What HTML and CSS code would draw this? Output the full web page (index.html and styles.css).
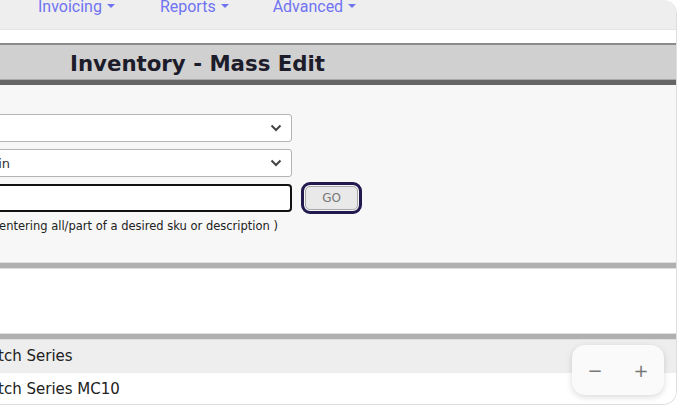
FILE: index.html
```html
<!DOCTYPE html>
<html lang="en">
<head>
  <meta charset="UTF-8" />
  <title>Inventory - Mass Edit</title>
  <link rel="stylesheet" href="styles.css">
</head>
<body>
  <div class="app">
    <nav class="navbar">
      <a href="#">Invoicing <span class="caret"></span></a>
      <a href="#">Reports <span class="caret"></span></a>
      <a href="#">Advanced <span class="caret"></span></a>
    </nav>
    <div class="nav-gap"></div>

    <div class="title-bar">
      <h1>Inventory - Mass Edit</h1>
    </div>

    <!-- Filtros -->
    <div class="filtros">
      <div class="campo">
        <div class="select-box">
          <span></span>
          <svg viewBox="0 0 12 8" width="12" height="8"><path d="M1.5 1.5 L6 6 L10.5 1.5" fill="none" stroke="#444" stroke-width="2"/></svg>
        </div>
      </div>
      <div class="campo">
        <div class="select-box">
          <span>Begin</span>
          <svg viewBox="0 0 12 8" width="12" height="8"><path d="M1.5 1.5 L6 6 L10.5 1.5" fill="none" stroke="#444" stroke-width="2"/></svg>
        </div>
      </div>
      <div class="campo">
        <div class="input-box"></div>
        <div class="go-ring"><button type="button">GO</button></div>
      </div>
      <p class="ajuda">( Search by entering all/part of a desired sku or description )</p>
    </div>

    <div class="divisor"></div>
    <div class="vazio"></div>
    <div class="divisor"></div>

    <div class="linha cinza">Watch Series</div>
    <div class="linha">Watch Series MC10</div>
  </div>

  <div class="zoom">
    <span>&minus;</span>
    <span>+</span>
  </div>
</body>
</html>
```

FILE: styles.css
```css
/* Página */
body {
  margin: 0;
  background-color: #ffffff;
  font-family: 'DejaVu Sans', Verdana, sans-serif;
  color: #222;
  overflow: hidden;
}

.app {
  margin-left: -281px;
  width: 957px;
  height: 404px;
  border-right: 1px solid #dedede;
  border-bottom: 1px solid #dedede;
  border-radius: 0 14px 14px 0;
  overflow: hidden;
  background-color: #f7f7f7;
}

/* Menu */
.navbar {
  height: 30px;
  background-color: #eeeeee;
  display: flex;
  align-items: flex-start;
  padding-left: 319px;
  border-bottom: 1px solid #e4e4e4;
  box-sizing: border-box;
}

.navbar a {
  font-family: Roboto, sans-serif;
  font-size: 16px;
  line-height: 20px;
  margin-top: -3px;
  color: #7073f2;
  text-decoration: none;
  margin-right: 45px;
}

.navbar a:nth-child(2) {
  margin-right: 44px;
}

.caret {
  display: inline-block;
  width: 0;
  height: 0;
  border-left: 4px solid transparent;
  border-right: 4px solid transparent;
  border-top: 4px solid #7073f2;
  vertical-align: 4px;
  margin-left: 1px;
}

.nav-gap {
  height: 13px;
  background-color: #ffffff;
}

/* Título */
.title-bar {
  background-color: #d0d0d0;
  border-top: 2px solid #8a8a8a;
  border-bottom: 5px solid #666666;
  box-shadow: inset 0 -1px 0 #aaaaaa;
  height: 35px;
  text-align: center;
}

.title-bar h1 {
  margin: 0;
  font-size: 21.3px;
  line-height: 37px;
  font-weight: bold;
  color: #1c1c2a;
}

/* Filtros */
.filtros {
  padding: 29px 0 0 173px;
  height: 148px;
  box-sizing: content-box;
}

.campo {
  display: flex;
  align-items: flex-start;
  gap: 9px;
  margin-bottom: 7px;
}

.select-box {
  width: 400px;
  height: 28px;
  box-sizing: border-box;
  background-color: #ffffff;
  border: 1px solid #b4b4b4;
  border-radius: 3px;
  display: flex;
  align-items: center;
  justify-content: space-between;
  padding: 0 9px 0 80px;
  font-family: 'DejaVu Sans', sans-serif;
  font-size: 13px;
  color: #333;
}

.input-box {
  width: 400px;
  height: 28px;
  box-sizing: border-box;
  background-color: #ffffff;
  border: 2px solid #111111;
  border-radius: 4px;
}

.go-ring {
  border: 3px solid #201a4f;
  border-radius: 9px;
  padding: 1px;
  margin: -2px 0 -2px 0;
}

.go-ring button {
  width: 53px;
  height: 24px;
  box-sizing: border-box;
  background-color: #e9e9e9;
  border: 1px solid #a8a8a8;
  border-radius: 5px;
  font-family: 'DejaVu Sans', sans-serif;
  font-size: 12px;
  color: #777;
  padding: 0;
  display: block;
}

.ajuda {
  margin: 3px 0 0 38px;
  font-size: 11.5px;
  color: #222;
  white-space: nowrap;
}

.divisor {
  height: 5px;
  background-color: #b0b0b0;
  border-top: 1px solid #e0e0e0;
  border-bottom: 1px solid #e0e0e0;
}

.vazio {
  height: 64px;
  background-color: #ffffff;
}

/* Linhas da tabela */
.linha {
  height: 33px;
  line-height: 33px;
  padding-left: 256px;
  font-family: 'DejaVu Sans', sans-serif;
  font-size: 15px;
  color: #222;
  background-color: #ffffff;
}

.linha.cinza {
  background-color: #eeeeee;
}

/* Controle de zoom */
.zoom {
  position: absolute;
  left: 572px;
  top: 345px;
  width: 92px;
  height: 50px;
  background-color: #fafafa;
  border-radius: 13px;
  box-shadow: 0 2px 6px rgba(0, 0, 0, 0.15);
  display: flex;
  justify-content: space-around;
  align-items: center;
  font-family: 'DejaVu Sans', sans-serif;
  font-size: 18px;
  color: #777;
}
```
